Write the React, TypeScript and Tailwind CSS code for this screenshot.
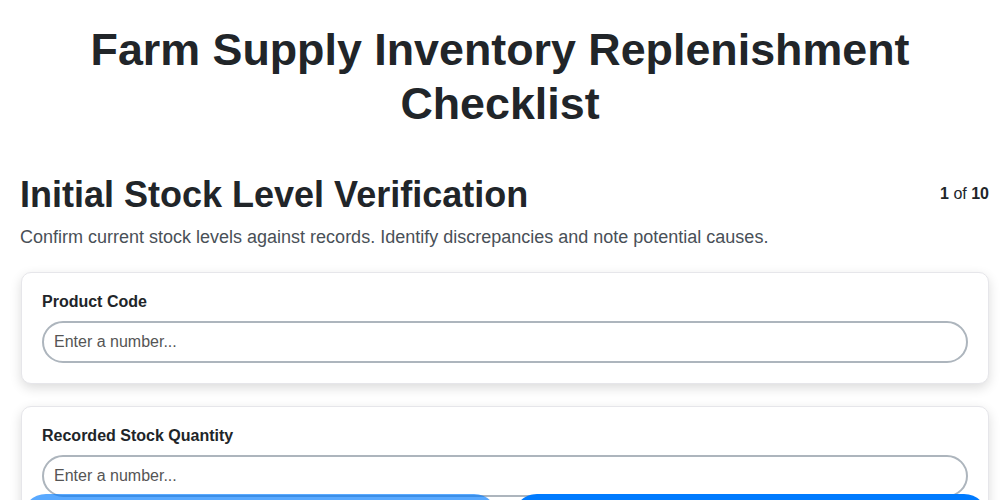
const fields = ['Product Code', 'Recorded Stock Quantity']

function FieldCard({ label }: { label: string }) {
  return (
    <div className="rounded-[10px] border border-[#e6e6ea] bg-white p-5 shadow-[0_4px_12px_rgba(0,0,0,0.14)]">
      <label className="mb-2.5 block text-base font-bold leading-[18px] text-[#212529]">{label}</label>
      <input
        type="text"
        placeholder="Enter a number..."
        className="block h-[42px] w-full rounded-full border-2 border-[#adb5bd] bg-white px-[10px] text-base text-[#212529] placeholder:text-[#555] focus:outline-none"
      />
    </div>
  )
}

export default function App() {
  return (
    <div className="min-h-screen bg-white font-['Liberation_Sans',Arial,sans-serif] text-[#212529]">
      <h1 className="pt-[23px] text-center text-[44.8px] font-bold leading-[1.2] text-[#212529]">
        Farm Supply Inventory Replenishment
        <br />
        Checklist
      </h1>

      <div className="pl-5 pr-[11px] pt-[42px]">
        <div className="flex items-center justify-between">
          <h2 className="text-[36px] font-bold leading-[1.2] text-[#212529]">Initial Stock Level Verification</h2>
          <div className="text-base text-[#212529]">
            <span className="font-bold">1</span> of <span className="font-bold">10</span>
          </div>
        </div>
        <p className="mt-2 text-lg leading-[27px] text-[#495057]">
          Confirm current stock levels against records. Identify discrepancies and note potential causes.
        </p>

        <div className="mt-[21px] flex flex-col gap-[22px] pb-24 pl-px">
          {fields.map((f) => (
            <FieldCard key={f} label={f} />
          ))}
        </div>
      </div>

      <div className="fixed left-[22px] right-[12px] top-[494px] flex gap-[15px]">
        <button className="h-12 flex-1 rounded-full bg-[#007bff] text-base font-bold text-white opacity-65">
          Previous
        </button>
        <button className="h-12 flex-1 rounded-full bg-[#007bff] text-base font-bold text-white">Next</button>
      </div>
    </div>
  )
}
